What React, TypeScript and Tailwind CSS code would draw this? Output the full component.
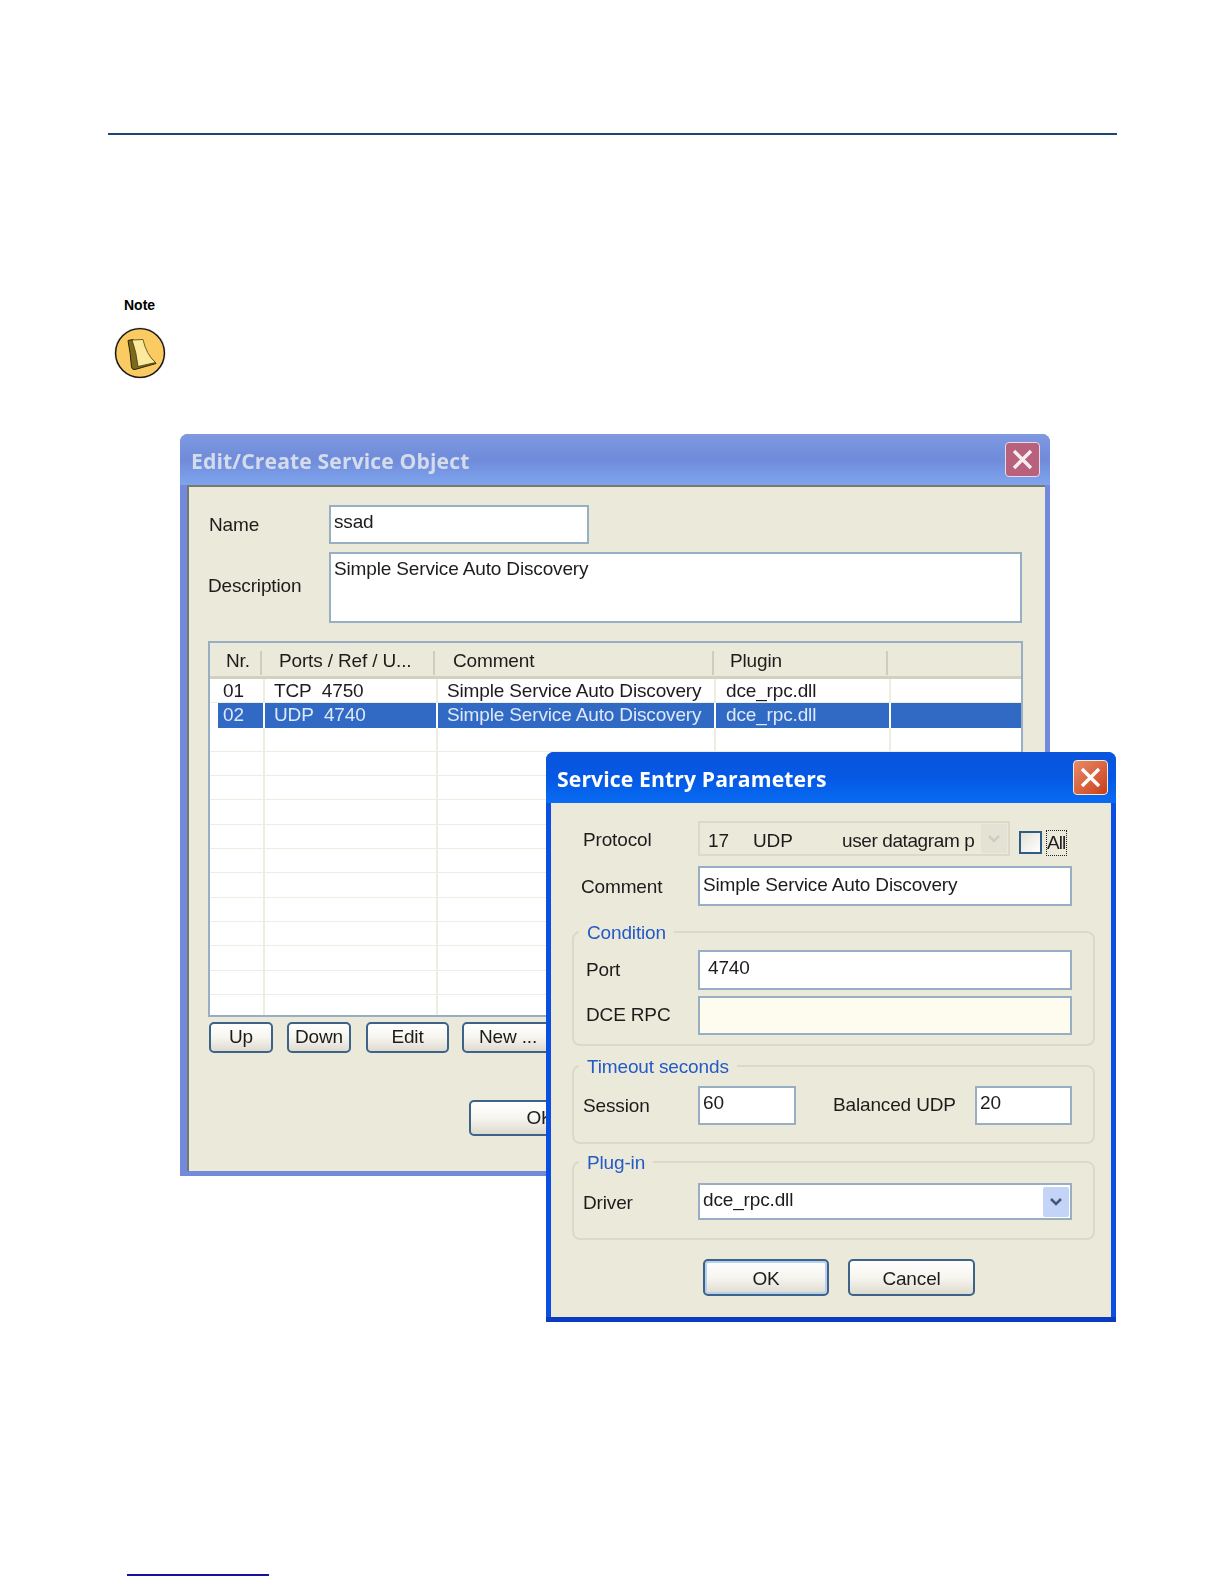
const ui = { fontFamily: '"Liberation Sans", Arial, sans-serif' };
const titleFont = { fontFamily: '"Open Sans", "Noto Sans", sans-serif' };

function NoteIcon() {
  return (
    <svg width="52" height="52" viewBox="0 0 52 52" className="block">
      <circle cx="26" cy="26" r="25.8" fill="#00000022" />
      <circle cx="26" cy="26" r="24.4" fill="#f9cb62" stroke="#111" strokeWidth="1.4" />
      <path d="M14 13.5 L19 12.5 L42 36.5 L21 42.5 Q18 43 17.5 40 Q16.5 26 14 13.5 Z" fill="#7d6a1c" stroke="#2a2408" strokeWidth="1" />
      <path d="M18 13 L29 12.5 Q32 27 41.5 35.5 L24 39.5 Q22.5 25 18 13 Z" fill="#fbe99c" stroke="#4a3f10" strokeWidth="0.8" />
    </svg>
  );
}

function Input({ className, children }: { className: string; children?: React.ReactNode }) {
  return (
    <div className={"border-2 border-[#97aec3] shrink-0 overflow-hidden whitespace-nowrap pl-[3px] pt-[2px] leading-[26px] " + className}>
      {children}
    </div>
  );
}

function XpButton({ className, children }: { className: string; children: React.ReactNode }) {
  return (
    <div className={"border-2 border-[#3d6488] rounded-[5px] bg-gradient-to-b from-white via-[#f6f5ef] to-[#dedbcf] flex items-center justify-center shrink-0 " + className}>
      {children}
    </div>
  );
}

function Group({ legend, className, children }: { legend: string; className: string; children: React.ReactNode }) {
  return (
    <div className={"relative w-[523px] border-2 border-[#dcd9c9] rounded-[8px] " + className}>
      <span className="absolute -top-[12px] left-[5px] bg-[#ebe9d9] px-[8px] leading-[24px] text-[#2459c8]">{legend}</span>
      {children}
    </div>
  );
}

const COLS = ["w-[55px]", "w-[173px]", "w-[278px]", "w-[175px]", "flex-1"];

function Row({ cells }: { cells: string[] }) {
  return (
    <div className="flex h-[24.3px] shrink-0 border-b border-[#efece2] leading-[23px]">
      {COLS.map((c, i) => (
        <div key={i} className={c + " border-r-2 border-[#efece2] last:border-r-0 whitespace-nowrap overflow-hidden " + (i === 0 ? "pl-[13px]" : i === 3 ? "pl-[10px]" : "pl-[9px]")}>
          {cells[i] ?? ""}
        </div>
      ))}
    </div>
  );
}

function SelectedRow({ cells }: { cells: string[] }) {
  return (
    <div className="flex h-[24.3px] shrink-0 leading-[23px] text-[#dfe8f7] pl-[8px]">
      {[["w-[47px]", "pl-[5px]"], ["w-[173px]", "pl-[9px]"], ["w-[278px]", "pl-[9px]"], ["w-[175px]", "pl-[10px]"], ["flex-1", ""]].map(([w, p], i) => (
        <div key={i} className={w + " " + p + " bg-[#316ac5] border-r-2 border-white last:border-r-0 whitespace-nowrap overflow-hidden"}>
          {cells[i]}
        </div>
      ))}
    </div>
  );
}

function ServiceObject() {
  const headers = [
    ["w-[52px]", "pl-[16px]", "Nr."],
    ["w-[173px]", "pl-[17px]", "Ports / Ref / U..."],
    ["w-[279px]", "pl-[18px]", "Comment"],
    ["w-[174px]", "pl-[16px]", "Plugin"],
  ];
  return (
    <div className="absolute left-[180px] top-[434px] w-[870px] h-[742px] flex flex-col rounded-t-[8px] bg-[#7289dc] pb-[5px] pl-[7px] pr-[5px] text-[19px] tracking-[-0.15px] text-[#1c1c1c] blur-[0.4px]" style={ui}>
      <div className="h-[51px] shrink-0 -ml-[7px] -mr-[5px] pl-[11px] pr-[10px] rounded-t-[8px] flex items-center justify-between bg-gradient-to-b from-[#7f9ae0] via-[#6f8bda] to-[#7fa5ee]">
        <span className="text-[21.2px] mt-[3px] font-bold text-[#d4dcec] tracking-[0.1px]" style={titleFont}>Edit/Create Service Object</span>
        <div className="w-[35px] h-[35px] rounded-[4px] border border-[#e4dce8] bg-[#b8607c] flex items-center justify-center">
          <svg width="23" height="23" viewBox="0 0 23 23"><path d="M3 3 L20 20 M20 3 L3 20" stroke="#f4eef2" strokeWidth="3.4" /></svg>
        </div>
      </div>
      <div className="flex-1 min-h-0 bg-[#ebe9d9] border-t-2 border-l-2 border-t-[#7b7a68] border-l-[#767670] pl-[19px] pt-[18px] overflow-hidden">
        <div className="flex items-center h-[39px]">
          <span className="w-[121px] pl-[1px] pt-[1px]">Name</span>
          <Input className="w-[260px] h-[39px] bg-white">ssad</Input>
        </div>
        <div className="flex items-center h-[71px] mt-[8px]">
          <span className="w-[121px] pb-[3px]">Description</span>
          <Input className="w-[693px] h-[71px] bg-white">Simple Service Auto Discovery</Input>
        </div>
        <div className="mt-[18px] w-[815px] h-[376px] border-2 border-[#97aec3] bg-white flex flex-col overflow-hidden">
          <div className="h-[36px] shrink-0 flex bg-[#ebe9d9] border-b-[3px] border-[#d4d0c0]">
            {headers.map(([w, p, t]) => (
              <div key={t} className={w + " " + p + " leading-[36px] relative"}>
                {t}
                <span className="absolute right-0 top-[8px] h-[24px] w-[2px] bg-[#d0ccbc]" />
              </div>
            ))}
            <div className="flex-1" />
          </div>
          <Row cells={["01", "TCP\u00a0\u00a04750", "Simple Service Auto Discovery", "dce_rpc.dll"]} />
          <SelectedRow cells={["02", "UDP\u00a0\u00a04740", "Simple Service Auto Discovery", "dce_rpc.dll"]} />
          {Array.from({ length: 12 }, (_, i) => (
            <Row key={i} cells={[]} />
          ))}
        </div>
        <div className="flex mt-[5px] ml-[1px]">
          <XpButton className="w-[64px] h-[31px]">Up</XpButton>
          <XpButton className="w-[64px] h-[31px] ml-[14px]">Down</XpButton>
          <XpButton className="w-[83px] h-[31px] ml-[15px]">Edit</XpButton>
          <XpButton className="w-[90px] h-[31px] ml-[13px] !justify-start pl-[15px]">New ...</XpButton>
        </div>
        <div className="mt-[47px] ml-[261px]">
          <XpButton className="w-[130px] h-[36px] pl-[12px]">OK</XpButton>
        </div>
      </div>
    </div>
  );
}

function ServiceEntry() {
  return (
    <div className="absolute left-[546px] top-[752px] w-[570px] h-[570px] flex flex-col rounded-t-[8px] bg-[#0a4fe0] border-b-[5px] border-b-[#0a3cc0] px-[5px] text-[19px] tracking-[-0.15px] text-[#1c1c1c] blur-[0.4px]" style={ui}>
      <div className="h-[51px] shrink-0 -mx-[5px] pl-[11px] pr-[8px] rounded-t-[8px] flex items-center justify-between bg-gradient-to-b from-[#0a55dc] via-[#0558e4] to-[#0a6cf2]">
        <span className="text-[21.2px] mt-[3px] font-bold text-white tracking-[0.1px]" style={titleFont}>Service Entry Parameters</span>
        <div className="w-[35px] h-[35px] rounded-[4px] border border-[#f2ead8] bg-gradient-to-br from-[#e88a66] to-[#c93c14] flex items-center justify-center">
          <svg width="23" height="23" viewBox="0 0 23 23"><path d="M3 3 L20 20 M20 3 L3 20" stroke="#fff" strokeWidth="3.4" /></svg>
        </div>
      </div>
      <div className="flex-1 min-h-0 bg-[#ebe9d9] pl-[21px] pt-[18px] overflow-hidden">
        <div className="flex items-center h-[35px] pl-[11px]">
          <span className="w-[115px] pt-[4px]">Protocol</span>
          <div className="w-[312px] h-[35px] shrink-0 flex items-center border-2 border-[#dcd9c8] bg-[#ebe9d9] pl-[8px] whitespace-nowrap">
            <span className="w-[45px] pt-[5px]">17</span>
            <span className="w-[89px] pt-[5px]">UDP</span>
            <span className="pt-[5px] tracking-[-0.4px]">user datagram p</span>
            <div className="ml-auto mr-[1px] w-[26px] h-[29px] bg-[#e4e2d4] rounded-[2px] flex items-center justify-center">
              <svg width="14" height="10" viewBox="0 0 14 10"><path d="M2 2 L7 7 L12 2" fill="none" stroke="#cfccba" strokeWidth="2.4" /></svg>
            </div>
          </div>
          <div className="ml-[9px] mt-[8px] w-[23px] h-[23px] shrink-0 border-2 border-[#2f5c85] bg-gradient-to-br from-[#e3e1d6] to-white" />
          <span className="ml-[4px] mt-[8px] border border-dotted border-[#222] leading-[24px] tracking-[-1px] pr-[1px]">All</span>
        </div>
        <div className="flex items-center h-[40px] mt-[10px] pl-[9px]">
          <span className="w-[117px] pt-[2px]">Comment</span>
          <Input className="w-[374px] h-[40px] bg-white !pt-[4px]">Simple Service Auto Discovery</Input>
        </div>
        <Group legend="Condition" className="h-[115px] mt-[25px] pt-[17px]">
          <div className="flex items-center h-[40px] pl-[12px]">
            <span className="w-[112px]">Port</span>
            <Input className="w-[374px] h-[40px] bg-white !pl-[8px] !pt-[3px]">4740</Input>
          </div>
          <div className="flex items-center h-[39px] mt-[6px] pl-[12px]">
            <span className="w-[112px] pb-[1px]">DCE RPC</span>
            <Input className="w-[374px] h-[39px] bg-[#fdfcef]" />
          </div>
        </Group>
        <Group legend="Timeout seconds" className="h-[79px] mt-[19px] pt-[19px]">
          <div className="flex items-center h-[39px] pl-[9px]">
            <span className="w-[115px] pt-[2px]">Session</span>
            <Input className="w-[98px] h-[39px] bg-white">60</Input>
            <span className="ml-[37px] w-[142px] whitespace-nowrap">Balanced UDP</span>
            <Input className="w-[97px] h-[39px] bg-white">20</Input>
          </div>
        </Group>
        <Group legend="Plug-in" className="h-[79px] mt-[17px] pt-[20px]">
          <div className="flex items-center h-[37px] pl-[9px]">
            <span className="w-[115px] pt-[3px]">Driver</span>
            <div className="w-[374px] h-[37px] shrink-0 border-2 border-[#97aec3] bg-white pl-[3px] flex items-center justify-between">
              <span className="-mt-[3px]">dce_rpc.dll</span>
              <div className="w-[26px] h-[30px] mr-[1px] rounded-[2px] bg-[#c4d4f6] flex items-center justify-center">
                <svg width="14" height="10" viewBox="0 0 14 10"><path d="M2 2 L7 7 L12 2" fill="none" stroke="#44587e" strokeWidth="2.6" /></svg>
              </div>
            </div>
          </div>
        </Group>
        <div className="flex mt-[19px] pl-[131px]">
          <XpButton className="w-[126px] h-[37px] pt-[3px] border-[#2f5c85] shadow-[inset_0_0_0_2px_#b8d0f0]">OK</XpButton>
          <XpButton className="w-[127px] h-[37px] pt-[3px] ml-[19px]">Cancel</XpButton>
        </div>
      </div>
    </div>
  );
}

export default function App() {
  return (
    <div className="relative h-[1584px] w-[1224px] overflow-hidden bg-white flex flex-col">
      <div className="mt-[133px] ml-[108px] w-[1009px] h-[2px] bg-[#1a4674] shrink-0" />
      <div className="mt-[162px] ml-[124px] text-[14px] font-bold leading-[16px] text-black shrink-0" style={ui}>Note</div>
      <div className="mt-[14px] ml-[114px] shrink-0"><NoteIcon /></div>
      <ServiceObject />
      <ServiceEntry />
      <div className="mt-auto mb-[8px] ml-[127px] w-[142px] h-[2px] bg-[#14149a] shrink-0" />
    </div>
  );
}
